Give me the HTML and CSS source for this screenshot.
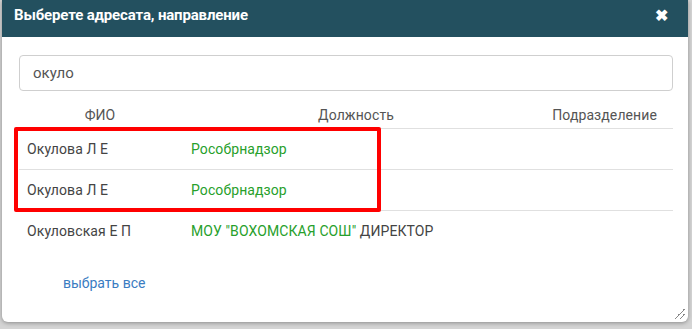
FILE: index.html
```html
<!DOCTYPE html>
<html>
  <head>
    <title>Выберете адресата</title>
    <link rel="stylesheet" href="styles.css">
  </head>
  <body>
    <div class="dialog">
      <div class="dialog-header">
        <span class="dialog-title">Выберете адресата, направление</span>
        <span class="dialog-close">&#10006;</span>
      </div>
      <div class="dialog-body">
        <div class="search-box">окуло</div>
        <table class="result-table">
          <thead>
            <tr>
              <th class="col-name">ФИО</th>
              <th class="col-post">Должность</th>
              <th class="col-dept">Подразделение</th>
            </tr>
          </thead>
          <tbody>
            <tr>
              <td>Окулова Л Е</td>
              <td><span class="org">Рособрнадзор</span></td>
              <td></td>
            </tr>
            <tr>
              <td>Окулова Л Е</td>
              <td><span class="org">Рособрнадзор</span></td>
              <td></td>
            </tr>
            <tr class="last">
              <td>Окуловская Е П</td>
              <td><span class="org">МОУ "ВОХОМСКАЯ СОШ"</span> ДИРЕКТОР</td>
              <td></td>
            </tr>
          </tbody>
        </table>
        <div class="highlight"></div>
        <a class="select-all" href="#">выбрать все</a>
      </div>
      <div class="resize-grip"></div>
    </div>
  </body>
</html>
```

FILE: styles.css
```css
body {
  margin: 0;
  padding: 0 4px 0 2px;
  background-color: #d4d4d4;
  font-family: Roboto, Arial, sans-serif;
  height: 329px;
  overflow: hidden;
}
.dialog {
  position: relative;
  height: 322px;
  background-color: #fff;
  border-radius: 0 0 6px 6px;
  box-shadow: 0 1px 4px rgba(0, 0, 0, 0.35);
}
.dialog-header {
  display: flex;
  justify-content: space-between;
  align-items: center;
  height: 37px;
  padding: 0 20px 0 12px;
  background-color: #23505f;
  color: #fff;
}
.dialog-title {
  font-size: 15px;
  font-weight: bold;
  letter-spacing: -0.15px;
  padding-bottom: 8px;
}
.dialog-close {
  font-size: 16px;
  font-weight: bold;
  padding-bottom: 6px;
}
.dialog-body {
  position: relative;
  padding: 18px 15px 0 17px;
}
.search-box {
  height: 36px;
  box-sizing: border-box;
  border: 1px solid #cfcfcf;
  border-radius: 4px;
  padding: 8px 13px;
  font-size: 15px;
  color: #555;
}
.result-table {
  width: 100%;
  border-collapse: collapse;
  margin-top: 15px;
  font-size: 14px;
  letter-spacing: 0.1px;
  color: #444;
}
.result-table th {
  font-weight: normal;
  color: #555;
  height: 18px;
  padding: 0 0 4px;
  border-bottom: 1px solid #e0e0e0;
  vertical-align: middle;
}
.result-table th.col-name {
  width: 162px;
}
.result-table th.col-post {
  width: 350px;
}
.result-table th.col-dept {
  text-align: right;
  padding-right: 16px;
}
.result-table td {
  height: 40px;
  padding: 0 0 0 8px;
  border-bottom: 1px solid #e0e0e0;
  vertical-align: middle;
}
.result-table td + td {
  padding-left: 10px;
}
.result-table tr.last td {
  border-bottom: none;
}
.org {
  color: #27a02b;
}
.highlight {
  position: absolute;
  left: 12px;
  top: 90px;
  width: 359px;
  height: 77px;
  border: 4px solid #f00;
  border-radius: 2px;
}
.select-all {
  display: inline-block;
  margin: 24px 0 0 44px;
  font-size: 14px;
  color: #3a7cc2;
  text-decoration: none;
}
.resize-grip {
  position: absolute;
  right: 3px;
  bottom: 3px;
  width: 10px;
  height: 10px;
  background: linear-gradient(135deg, transparent 45%, #888 45%, #888 52%, transparent 52%, transparent 70%, #888 70%, #888 77%, transparent 77%);
}
```
